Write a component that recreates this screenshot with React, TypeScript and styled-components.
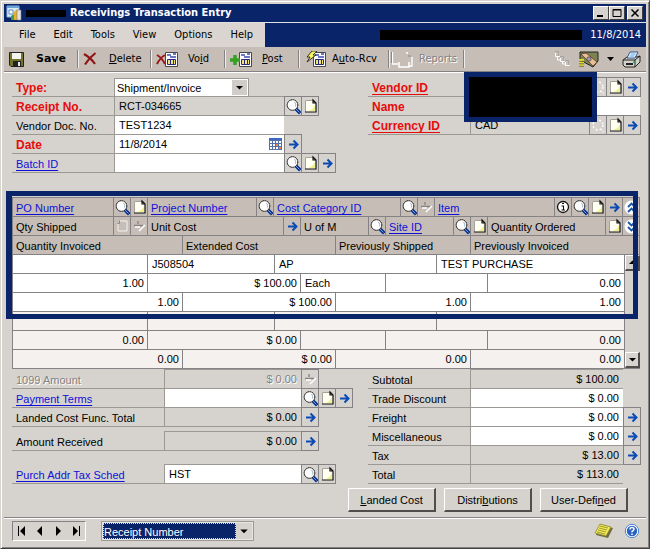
import React from "react";
import styled, { createGlobalStyle, css } from "styled-components";

const navy = "#0a246a";
const face = "#d6d3ce";
const tan = "#c6beb6";
const line = "#9c9994";
const edge = "#848284";

const GlobalStyle = createGlobalStyle`
  * { box-sizing: border-box; }
  body { margin: 0; background: #fff; }
  body, button, input, select {
    font-family: "Liberation Sans", Arial, sans-serif;
    font-size: 11px;
    line-height: 16px;
    color: #000;
  }
  button { margin: 0; padding: 0; border: 0; background: none; }
  svg { display: block; flex: none; }
`;

const Window = styled.div`
  margin: 0 4px 3px 0;
  padding: 3px;
  border: 1px solid ${face};
  border-right-color: #42403e;
  border-bottom-color: #42403e;
  box-shadow: inset 1px 1px #fff, inset -1px -1px ${edge};
  background: ${face};
`;

const TitleBar = styled.header`
  display: flex;
  align-items: center;
  gap: 4px;
  height: 18px;
  padding: 0 3px 0 2px;
  background: ${navy};
`;

const Title = styled.h1`
  flex: 1;
  margin: 0;
  font: bold 11px/18px "DejaVu Sans Condensed", "DejaVu Sans", sans-serif;
  color: #fff;
  white-space: nowrap;
`;

const Captions = styled.div`
  display: flex;
`;

const Redacted = styled.span<{ $w: number; $h: number }>`
  width: ${(p) => p.$w}px;
  height: ${(p) => p.$h}px;
  background: #000;
`;

const Caption = styled.button<{ $gap?: boolean }>`
  display: flex;
  align-items: center;
  justify-content: center;
  width: 16px;
  height: 14px;
  margin-left: ${(p) => (p.$gap ? 2 : 0)}px;
  background: ${face};
  border: 1px solid #fff;
  border-right-color: #404040;
  border-bottom-color: #404040;
`;

const MenuRow = styled.div`
  display: flex;
  height: 25px;
  border-top: 1px solid #e4e2e0;
  background: ${navy};
`;

const Menu = styled.nav`
  display: flex;
  align-items: center;
  gap: 18px;
  padding: 0 12px 0 15px;
  background: #dad5d1;
`;

const MenuItem = styled.button`
  font: 11px/16px "DejaVu Sans Condensed", "DejaVu Sans", sans-serif;
`;

const Session = styled.div`
  flex: 1;
  display: flex;
  align-items: center;
  justify-content: flex-end;
  gap: 8px;
  padding-right: 5px;
  font: 11px/16px "DejaVu Sans Condensed", "DejaVu Sans", sans-serif;
  color: #fff;
`;

const Toolbar = styled.div`
  display: flex;
  align-items: center;
  height: 25px;
  background: ${tan};
  border-bottom: 1px solid ${edge};
  box-shadow: 0 1px #fff;
`;

const Tool = styled.button<{ $w: number; $gap: number; $strong?: boolean; $off?: boolean }>`
  display: flex;
  align-items: center;
  gap: ${(p) => p.$gap}px;
  width: ${(p) => p.$w}px;
  height: 18px;
  padding-left: 5px;
  font: 11px/16px "DejaVu Sans Condensed", "DejaVu Sans", sans-serif;
  white-space: nowrap;
  border-right: 1px solid ${edge};
  box-shadow: 1px 0 #eee;
  ${(p) => p.$strong && css`font: bold 11px/16px "DejaVu Sans", sans-serif;`}
  ${(p) => p.$off && css`padding-left: 2px; color: ${edge}; text-shadow: 1px 1px #fff;`}
`;

const ToolEnd = styled.div`
  flex: 1;
  display: flex;
  align-items: center;
  justify-content: flex-end;
  gap: 4px;
  padding-right: 3px;
`;

const Main = styled.main`
  padding: 6px 6px 5px 8px;
`;

const Columns = styled.div`
  display: grid;
  grid-template-columns: minmax(0, 340fr) minmax(0, 272fr);
  gap: 16px;
`;

const Group = styled.div<{ $label?: number; $icons?: number; $inset?: number }>`
  position: relative;
  padding-right: ${(p) => p.$inset || 0}px;
  --cols: ${(p) => p.$label || 102}px minmax(0, 1fr) repeat(${(p) => p.$icons || 3}, 17px);
`;

const Row = styled.div<{ $gap?: number }>`
  display: grid;
  grid-template-columns: var(--cols);
  height: 19px;
  margin-top: ${(p) => p.$gap || 0}px;
`;

const Label = styled.label<{ $kind?: string }>`
  padding: 2px 0 0 4px;
  border-bottom: 1px solid ${line};
  white-space: nowrap;
  line-height: 16px;
  ${(p) => p.$kind === "required" && css`font-weight: bold; font-size: 12px; color: #e60c0c;`}
  ${(p) => p.$kind === "off" && css`color: ${edge}; text-shadow: 1px 1px #fff;`}
`;

const Link = styled.a`
  color: #1010d8;
  text-decoration: underline;
  text-underline-offset: 2px;
`;

const RedLink = styled(Link)`
  color: inherit;
`;

const FieldBox = styled.div<{ $white?: boolean; $wide?: boolean }>`
  display: flex;
  align-items: center;
  grid-column: ${(p) => (p.$wide ? "2 / -1" : "auto")};
  border-left: 1px solid ${line};
  border-bottom: 1px solid ${line};
  box-shadow: 0 -1px ${line};
  background: ${(p) => (p.$white ? "#fff" : "transparent")};
`;

const Input = styled.input<{ $money?: boolean; $off?: boolean }>`
  flex: 1;
  min-width: 0;
  height: 18px;
  padding: 0 4px;
  border: 0;
  outline: 0;
  background: transparent;
  text-align: ${(p) => (p.$money ? "right" : "left")};
  ${(p) => p.$off && css`color: ${edge}; text-shadow: 1px 1px #fff;`}
`;

const IconButton = styled.button`
  position: relative;
  display: flex;
  align-items: center;
  justify-content: center;
  width: 18px;
  height: 20px;
  margin-top: -1px;
  border: 1px solid ${edge};
`;

const Bare = styled.button`
  padding: 0 2px;
`;

const TypeSelect = styled.div`
  display: flex;
  width: 135px;
  max-width: 100%;
  height: 19px;
  border: 1px solid ${line};
  background: #fff;
  svg { margin: 1px; background: #d0cdc8; pointer-events: none; }
`;

const Select = styled.select<{ $dark?: boolean }>`
  flex: 1;
  min-width: 0;
  appearance: none;
  padding: 0 2px;
  border: 0;
  border-radius: 0;
  outline: 0;
  background: transparent;
  ${(p) => p.$dark && css`
    padding: 0;
    color: #fff;
    background: ${navy};
    border: 1px dotted #e0dcb0;
  `}
`;

const Cover = styled.div`
  position: absolute;
  top: -6px;
  left: 96px;
  right: 43px;
  height: 50px;
  border: 5px solid ${navy};
  background: #000;
`;

const GridFrame = styled.section`
  position: relative;
  display: grid;
  grid-template-columns: minmax(0, 1fr) 15px;
  margin: 24px 0 1px;
  border-top: 1px solid ${edge};
  border-left: 1px solid ${edge};
`;

const Table = styled.table`
  display: contents;
`;

const Head = styled.thead`
  display: block;
  grid-column: 1 / -1;
  background: ${tan};
`;

const Body = styled.tbody`
  display: block;
`;

const Tr = styled.tr<{ $cols: string; $shade?: boolean }>`
  display: grid;
  grid-template-columns: ${(p) => p.$cols};
  height: 19px;
  background: ${(p) => (p.$shade === undefined ? "transparent" : p.$shade ? "#f5f1ee" : "#fff")};
`;

const Th = styled.th`
  display: flex;
  padding: 0;
  font-weight: normal;
  text-align: left;
  white-space: nowrap;
  border-right: 1px solid ${edge};
  border-bottom: 1px solid ${edge};
`;

const ThText = styled.span`
  flex: 1;
  min-width: 0;
  padding: 2px 0 0 3px;
`;

const HeadIcon = styled.button`
  display: flex;
  align-items: center;
  justify-content: center;
  width: 17px;
  height: 18px;
  border-left: 1px solid ${edge};
`;

const Td = styled.td<{ $left?: boolean }>`
  padding: 1px 3px 0 4px;
  text-align: ${(p) => (p.$left ? "left" : "right")};
  white-space: nowrap;
  border-right: 1px solid ${edge};
  border-bottom: 1px solid ${edge};
`;

const Scroll = styled.div`
  display: flex;
  flex-direction: column;
  justify-content: space-between;
  background: ${face};
  border-bottom: 1px solid ${edge};
`;

const ScrollButton = styled.button`
  display: flex;
  align-items: center;
  justify-content: center;
  height: 16px;
  background: ${face};
  border: 1px solid #fff;
  border-right: 2px solid #504e4c;
  border-bottom: 2px solid #504e4c;
`;

const Highlight = styled.div`
  position: absolute;
  inset: -7px 2px 50px -7px;
  border: 5px solid ${navy};
  border-left-width: 6px;
  pointer-events: none;
`;

const Actions = styled.div`
  display: flex;
  justify-content: flex-end;
  gap: 8px;
  padding: 4px 12px 0 0;
`;

const Action = styled.button`
  width: 88px;
  height: 24px;
  border: 1px solid #fff;
  border-right: 2px solid #504e4c;
  border-bottom: 2px solid #504e4c;
`;

const Footer = styled.footer`
  display: flex;
  align-items: center;
  padding: 3px 4px 4px 8px;
  border-top: 1px solid ${edge};
  box-shadow: inset 0 1px #fff;
`;

const Nav = styled.div`
  display: flex;
  justify-content: space-around;
  align-items: center;
  width: 74px;
  height: 20px;
  margin-right: 15px;
  border: 1px solid ${edge};
  border-right-color: #fff;
  border-bottom-color: #fff;
`;

const SortBox = styled.div`
  display: flex;
  width: 153px;
  height: 20px;
  margin-right: auto;
  padding: 1px;
  border: 1px solid ${line};
  outline: 1px solid #e8e6e2;
  outline-offset: -2px;
  svg { pointer-events: none; }
`;

const FooterIcons = styled.div`
  display: flex;
  gap: 6px;
`;

const Lens = () => (
  <svg width="16" height="17" viewBox="0 0 16 17">
    <path d="M12 12l2 2" stroke="#0a2f8c" strokeWidth="3.4" strokeLinecap="square" />
    <path d="M11 11l3.500 3.500" stroke="#6aa4e8" strokeWidth="1" />
    <circle cx="7.500" cy="7" r="5.300" fill="#fdfdfd" stroke="#111" strokeDasharray="1.800 .4" />
    <path d="M9.500 4q2 2 1 4.500" stroke="#9db8cc" fill="none" />
  </svg>
);

const LensOff = () => (
  <svg width="16" height="17" viewBox="0 0 16 17" fill="none">
    <circle cx="8" cy="8" r="5" stroke="#fff" strokeDasharray="2 2" strokeWidth="1.3" />
    <path d="M11 12l3 3" stroke="#fff" strokeDasharray="2 1" />
  </svg>
);

const Note = () => (
  <svg width="15" height="16" viewBox="0 0 15 16">
    <path d="M2 2h8l3 3v9H2z" fill="#fffff2" />
    <path d="M12 7v6H5q5-1 7-6z" fill="#f2f08c" />
    <path d="M2.500 14V2.500H10" fill="none" stroke="#a5a29c" />
    <path d="M2 14h11V5L10 2v3h3" fill="none" stroke="#111" strokeWidth="1.2" />
  </svg>
);

const NoteOff = () => (
  <svg width="15" height="16" viewBox="0 0 15 16" fill="none">
    <path d="M5 3h7v10H3V6" stroke="#f4f2f0" />
    <path d="M4.500 2.500v3h-2" stroke="#8c8884" />
  </svg>
);

const Arrow = () => (
  <svg width="11" height="11" viewBox="0 0 11 11">
    <path d="M1 5.500h8M5.500 1.500l4 4-4 4" fill="none" stroke="#0b4bb3" strokeWidth="2" />
  </svg>
);

const ArrowOff = () => (
  <svg width="13" height="13" viewBox="0 0 13 13" fill="none">
    <path d="M1 5.500h9M5 1v3" stroke="#86827e" strokeWidth="1.300" />
    <path d="M2 7h5M6 11l6-6" stroke="#fff" strokeWidth="1.500" />
  </svg>
);

const Info = () => (
  <svg width="14" height="14" viewBox="0 0 14 14">
    <circle cx="7" cy="7" r="5.500" fill="#fff" stroke="#111" strokeWidth="1.300" />
    <path d="M6 3.500h2M5.500 6h2v4M5.500 10h3.500" stroke="#111" strokeWidth="1.100" fill="none" />
  </svg>
);

const Chevrons = ({ down }: { down?: boolean }) => (
  <svg width="15" height="15" viewBox="0 0 15 15">
    <circle cx="7.500" cy="7.500" r="7" fill="#fff" />
    <path d={down ? "M4 3l3.500 3.500L11 3M4 8l3.500 3.500L11 8" : "M4 7l3.500-3.500L11 7M4 12l3.500-3.500L11 12"} fill="none" stroke="#1b55a8" strokeWidth="1.800" />
  </svg>
);

const Triangle = ({ up, size = 15 }: { up?: boolean; size?: number }) => (
  <svg width={size} height={size} viewBox="0 0 15 15">
    <path d={up ? "M4 9h7L7.500 5.500z" : "M4 6h7L7.500 9.500z"} />
  </svg>
);

const Calendar = () => (
  <svg width="13" height="12" viewBox="0 0 13 12">
    <path d="M0 0h13v12H0z" fill="#5472a8" />
    <path d="M0 0h13v2H0z" fill="#3c67c4" />
    <path d="M1 3h2v2H1zm3 0h2v2H4zm3 0h2v2H7zm3 0h2v2h-2zM1 6h2v2H1zm3 0h2v2H4zm6 0h2v2h-2zM1 9h2v2H1zm3 0h2v2H4zm3 0h2v2H7z" fill="#fff" />
    <path d="M7 6h2v2H7zm3 3h2v2h-2z" fill="#e08a4a" />
  </svg>
);

const AppIcon = () => (
  <svg width="16" height="16" viewBox="0 0 16 16">
    <path d="M1 1h12v11H1z" fill="#d8ecf8" stroke="#8cb8dc" />
    <path d="M1 1h12v2H1z" fill="#6ca4dc" />
    <path d="M3 5h4v4H3z" fill="#fff" stroke="#5c8cc0" />
    <path d="M5 15v-4l3-2v6z" fill="#3c9c54" />
    <path d="M8 15V7l3-3v11z" fill="#e8b030" />
    <path d="M11 15V5h4v10z" fill="#e8e4dc" stroke="#68809c" strokeWidth=".6" />
  </svg>
);

const SaveIcon = () => (
  <svg width="15" height="15" viewBox="0 0 15 15">
    <path d="M.5.500h14v14H2l-1.500-1.500z" fill="#73732c" stroke="#222" />
    <path d="M3 1h9v6H3z" fill="#f4f4f0" />
    <path d="M4 9h8v5H4z" fill="#222" />
    <path d="M9 10h2v4H9z" fill="#e8e8e8" />
  </svg>
);

const CrossIcon = () => (
  <svg width="14" height="14" viewBox="0 0 14 14">
    <path d="M1 2q7 4 11 10M12.500 1Q6 6 2 12.500" fill="none" stroke="#8f1515" strokeWidth="2.200" />
  </svg>
);

const SheetIcon = ({ mark }: { mark: "void" | "post" | "auto" }) => (
  <svg width="22" height="17" viewBox="0 0 22 17">
    <path d="M9.500 1.500h12v14h-12z" fill="#fff" stroke="#46464e" />
    <path d="M11 4h4M17 3h3M14 6h6" stroke="#3c4cb4" strokeWidth="1.300" />
    <path d="M11.500 8.500h8v5h-8z" fill="#f2e27a" stroke="#27277c" />
    <path d="M14.500 9v5M17.500 9v5" stroke="#27277c" />
    {mark === "void" && <path d="M1 4q5 3 8 9M9 4q-5 3-8 9" fill="none" stroke="#9a1818" strokeWidth="2" />}
    {mark === "post" && <path d="M0 9h10M5 4v10" stroke="#36a020" strokeWidth="3.500" />}
    {mark === "auto" && <path d="M8 0h5L9 4h3L3 11l3-5H3z" fill="#f8f45c" stroke="#222" strokeWidth=".9" />}
  </svg>
);

const ReportsIcon = () => (
  <svg width="22" height="17" viewBox="0 0 22 17" fill="none">
    <path d="M1.500 1v12H7M15 2h2M21 6v9h-3" stroke="#fff" strokeWidth="1.300" />
    <path d="M8 11v5h10v-5" stroke="#fff" strokeWidth="1.500" />
    <path d="M.5 1v11M17 5h3" stroke="#8c8884" />
  </svg>
);

const TreeIcon = () => (
  <svg width="17" height="16" viewBox="0 0 17 16" fill="none">
    <path d="M1.500 1.500h4v4h-4zM6.500 6.500h4v4h-4zM11.500 10.500h4v4h-4zM3.500 6v3H6M8.500 11v2H11" stroke="#fff" />
    <path d="M1 1h4v4M6 6h4v4M11 10h4v4" stroke="#8c8884" />
  </svg>
);

const MapIcon = () => (
  <svg width="20" height="17" viewBox="0 0 20 17">
    <path d="M1 1h18v9l-5 6L1 9z" fill="#7c8250" stroke="#222" />
    <path d="M2 3l5-1 11 9-4 4z" fill="#e8bd98" stroke="#5a3c2c" strokeWidth=".8" />
    <circle cx="10" cy="8" r="2.200" fill="#9a9ab8" stroke="#5a3c2c" strokeWidth=".7" />
    <path d="M0 9h5M0 11.500h5M0 14h5" stroke="#e4dc30" strokeWidth="1.800" />
    <path d="M0 10.300h5M0 12.800h5M0 15.300h5" stroke="#55501a" strokeWidth=".7" />
  </svg>
);

const CaretIcon = () => (
  <svg width="7" height="4" viewBox="0 0 7 4">
    <path d="M0 0h7L3.500 4z" />
  </svg>
);

const PrinterIcon = () => (
  <svg width="19" height="17" viewBox="0 0 19 17">
    <path d="M1 9l4-3h10l3-1v6l-5 5H3l-2-2z" fill="#d4d2cc" stroke="#222" />
    <path d="M5 7l3-6h8l-3 6z" fill="#fff" stroke="#27539a" />
    <path d="M8.500 3h5M7.500 5h5" stroke="#4c9cd4" />
    <path d="M1 9h12l5-4M13 9v7" fill="none" stroke="#222" />
    <path d="M4 13h7" stroke="#222" strokeWidth="2" />
    <path d="M11 11h2" stroke="#1ca83c" strokeWidth="1.500" />
  </svg>
);

const StickyIcon = () => (
  <svg width="20" height="16" viewBox="0 0 20 16">
    <path d="M7 2l12 3-5 10L2 12z" fill="#6e6c3c" />
    <path d="M6 1l11 3-5 9L1 10z" fill="#f1eb54" stroke="#8c8630" strokeWidth=".8" />
    <path d="M6 3l8 2M5 5l8 2M4 7l8 2M3 9l8 2" stroke="#8c8630" strokeWidth=".8" />
  </svg>
);

const HelpIcon = () => (
  <svg width="16" height="16" viewBox="0 0 15 16">
    <circle cx="7.500" cy="8" r="6.700" fill="#fff" stroke="#4c82d4" />
    <circle cx="7.500" cy="8" r="5.200" fill="#2b62c0" />
    <path d="M5.500 6.500q0-2 2-2t2 1.800q0 .9-2 2.200v.8M7.500 10.500v1.500" fill="none" stroke="#fff" strokeWidth="1.500" />
  </svg>
);

const NavIcon = ({ d }: { d: string }) => (
  <svg width="10" height="10" viewBox="0 0 10 10">
    <path d={d} />
  </svg>
);

const icons = {
  lens: { el: <Lens />, name: "Lookup" },
  lensOff: { el: <LensOff />, name: "Lookup" },
  note: { el: <Note />, name: "Note" },
  noteOff: { el: <NoteOff />, name: "Note" },
  arrow: { el: <Arrow />, name: "Expand" },
  arrowOff: { el: <ArrowOff />, name: "Expand" },
  info: { el: <Info />, name: "Information" },
  up: { el: <Chevrons />, name: "Hide details" },
  down: { el: <Chevrons down />, name: "Show details" },
};
type IconName = keyof typeof icons;

type FieldProps = {
  id: string;
  label: string;
  value?: string;
  white?: boolean;
  money?: boolean;
  off?: boolean;
  required?: boolean;
  link?: boolean;
  wide?: boolean;
  gap?: number;
  buttons?: IconName[];
  extra?: React.ReactNode;
};

const Field = (p: FieldProps) => {
  const Anchor = p.required ? RedLink : Link;
  return (
    <Row $gap={p.gap}>
      <Label htmlFor={p.id} $kind={p.required ? "required" : p.off ? "off" : undefined}>
        {p.link ? <Anchor href="#">{p.label}</Anchor> : p.label}
      </Label>
      <FieldBox $white={p.white} $wide={p.wide}>
        <Input id={p.id} aria-label={p.label} defaultValue={p.value} readOnly={!p.white} $money={p.money} $off={p.off} />
        {p.extra}
      </FieldBox>
      {p.buttons?.map((b, i) => (
        <IconButton key={i} aria-label={`${p.label} ${icons[b].name}`}>{icons[b].el}</IconButton>
      ))}
    </Row>
  );
};

type Heading = { text: string; link?: boolean; buttons?: IconName[] };

const fr = (...sizes: number[]) => sizes.map((s) => `minmax(0, ${s}fr)`).join(" ");

const headings: { cols: string; cells: Heading[] }[] = [
  {
    cols: fr(135, 126, 161, 205),
    cells: [
      { text: "PO Number", link: true, buttons: ["lens", "note"] },
      { text: "Project Number", link: true, buttons: ["lens"] },
      { text: "Cost Category ID", link: true, buttons: ["lens", "arrowOff"] },
      { text: "Item", link: true, buttons: ["info", "lens", "note", "arrow", "up"] },
    ],
  },
  {
    cols: fr(135, 153, 85, 102, 152),
    cells: [
      { text: "Qty Shipped", buttons: ["noteOff", "arrowOff"] },
      { text: "Unit Cost", buttons: ["arrow"] },
      { text: "U of M", buttons: ["lens"] },
      { text: "Site ID", link: true, buttons: ["lens", "note"] },
      { text: "Quantity Ordered", buttons: ["note", "down"] },
    ],
  },
  {
    cols: fr(170, 153, 135, 169),
    cells: [{ text: "Quantity Invoiced" }, { text: "Extended Cost" }, { text: "Previously Shipped" }, { text: "Previously Invoiced" }],
  },
];

const bodyCols = [fr(135, 127, 162, 188), fr(135, 153, 85, 102, 137), fr(170, 153, 135, 154)];

const records = [
  [["", "J508504", "AP", "TEST PURCHASE"], ["1.00", "$ 100.00", "Each", "", "0.00"], ["1.00", "$ 100.00", "1.00", "1.00"]],
  [["", "", "", ""], ["0.00", "$ 0.00", "", "", "0.00"], ["0.00", "$ 0.00", "0.00", "0.00"]],
];

const App = () => (
  <>
    <GlobalStyle />
    <Window>
      <TitleBar>
        <AppIcon />
        <Redacted $w={40} $h={7} />
        <Title>Receivings Transaction Entry</Title>
        <Captions>
          <Caption aria-label="Minimize"><svg width="10" height="10"><path d="M1 7h6v2H1z" /></svg></Caption>
          <Caption aria-label="Maximize"><svg width="10" height="10"><path d="M1 1.500h8v7H1zM1 2h8" fill="none" stroke="#000" /></svg></Caption>
          <Caption aria-label="Close" $gap><svg width="10" height="10"><path d="M1.500 1.500l7 7M8.500 1.500l-7 7" stroke="#000" strokeWidth="1.500" /></svg></Caption>
        </Captions>
      </TitleBar>
      <MenuRow>
        <Menu>
          {["File", "Edit", "Tools", "View", "Options", "Help"].map((m) => <MenuItem key={m}>{m}</MenuItem>)}
        </Menu>
        <Session><Redacted $w={202} $h={10} />11/8/2014</Session>
      </MenuRow>
      <Toolbar>
        <Tool $w={74} $gap={12} $strong><SaveIcon />Save</Tool>
        <Tool $w={73} $gap={12}><CrossIcon /><span><u>D</u>elete</span></Tool>
        <Tool $w={74} $gap={10}><SheetIcon mark="void" /><span>Vo<u>i</u>d</span></Tool>
        <Tool $w={74} $gap={10}><SheetIcon mark="post" /><span><u>P</u>ost</span></Tool>
        <Tool $w={90} $gap={6}><SheetIcon mark="auto" /><span>A<u>u</u>to-Rcv</span></Tool>
        <Tool $w={75} $gap={6} $off disabled><ReportsIcon />Reports</Tool>
        <ToolEnd>
          <Bare aria-label="Workflow"><TreeIcon /></Bare>
          <Bare aria-label="Currency view"><MapIcon /></Bare>
          <Bare aria-label="Currency options"><CaretIcon /></Bare>
          <Bare aria-label="Print"><PrinterIcon /></Bare>
        </ToolEnd>
      </Toolbar>
      <Main>
        <Columns>
          <Group $inset={17}>
            <Row>
              <Label htmlFor="type" $kind="required">Type:</Label>
              <TypeSelect>
                <Select id="type"><option>Shipment/Invoice</option></Select>
                <Triangle />
              </TypeSelect>
            </Row>
            <Field id="receipt" label="Receipt No." value="RCT-034665" required buttons={["lens", "note"]} />
            <Field id="doc" label="Vendor Doc. No." value="TEST1234" white />
            <Field id="date" label="Date" value="11/8/2014" required white extra={<Bare aria-label="Pick a date"><Calendar /></Bare>} buttons={["arrow"]} />
            <Field id="batch" label="Batch ID" link white buttons={["lens", "note", "arrow"]} />
          </Group>
          <Group>
            <Field id="vendor" label="Vendor ID" required link white buttons={["lensOff", "note", "arrow"]} />
            <Field id="name" label="Name" required white wide />
            <Field id="currency" label="Currency ID" value="CAD" required link buttons={["lensOff", "note", "arrow"]} />
            <Cover />
          </Group>
        </Columns>
        <GridFrame>
          <Table>
            <Head>
              {headings.map((row, i) => (
                <Tr key={i} $cols={row.cols}>
                  {row.cells.map((c) => (
                    <Th key={c.text} scope="col">
                      <ThText>{c.link ? <Link href="#">{c.text}</Link> : c.text}</ThText>
                      {c.buttons?.map((b, j) => <HeadIcon key={j} aria-label={`${c.text} ${icons[b].name}`}>{icons[b].el}</HeadIcon>)}
                    </Th>
                  ))}
                </Tr>
              ))}
            </Head>
            <Body>
              {records.map((record, r) => record.map((cells, i) => (
                <Tr key={`${r}-${i}`} $cols={bodyCols[i]} $shade={r % 2 === 1}>
                  {cells.map((c, j) => <Td key={j} $left={/[A-Za-z]/.test(c)}>{c}</Td>)}
                </Tr>
              )))}
            </Body>
          </Table>
          <Scroll>
            <ScrollButton aria-label="Scroll up"><Triangle up /></ScrollButton>
            <ScrollButton aria-label="Scroll down"><Triangle /></ScrollButton>
          </Scroll>
          <Highlight />
        </GridFrame>
        <Columns>
          <Group $label={152}>
            <Field id="a1099" label="1099 Amount" value="$ 0.00" money off buttons={["arrowOff"]} />
            <Field id="terms" label="Payment Terms" link white buttons={["lens", "note", "arrow"]} />
            <Field id="landed" label="Landed Cost Func. Total" value="$ 0.00" money buttons={["arrow"]} />
            <Field id="received" label="Amount Received" value="$ 0.00" money gap={5} buttons={["arrow"]} />
            <Field id="tax-sched" label="Purch Addr Tax Sched" value="HST" link white gap={14} buttons={["lens", "note"]} />
          </Group>
          <Group $icons={1}>
            <Field id="subtotal" label="Subtotal" value="$ 100.00" money />
            <Field id="discount" label="Trade Discount" value="$ 0.00" money white />
            <Field id="freight" label="Freight" value="$ 0.00" money white buttons={["arrow"]} />
            <Field id="misc" label="Miscellaneous" value="$ 0.00" money white buttons={["arrow"]} />
            <Field id="tax" label="Tax" value="$ 13.00" money buttons={["arrow"]} />
            <Field id="total" label="Total" value="$ 113.00" money />
          </Group>
        </Columns>
        <Actions>
          <Action><u>L</u>anded Cost</Action>
          <Action>Distri<u>b</u>utions</Action>
          <Action>User-Defi<u>n</u>ed</Action>
        </Actions>
      </Main>
      <Footer>
        <Nav>
          <Bare aria-label="First"><NavIcon d="M1 0h1v10H1zM8 0v10L3 5z" /></Bare>
          <Bare aria-label="Previous"><NavIcon d="M7 0v10L2 5z" /></Bare>
          <Bare aria-label="Next"><NavIcon d="M3 0v10l5-5z" /></Bare>
          <Bare aria-label="Last"><NavIcon d="M8 0h1v10H8zM2 0v10l5-5z" /></Bare>
        </Nav>
        <SortBox>
          <Select $dark aria-label="Sort by"><option>Receipt Number</option></Select>
          <Triangle size={16} />
        </SortBox>
        <FooterIcons>
          <Bare aria-label="Window note"><StickyIcon /></Bare>
          <Bare aria-label="Help"><HelpIcon /></Bare>
        </FooterIcons>
      </Footer>
    </Window>
  </>
);

export default App;
